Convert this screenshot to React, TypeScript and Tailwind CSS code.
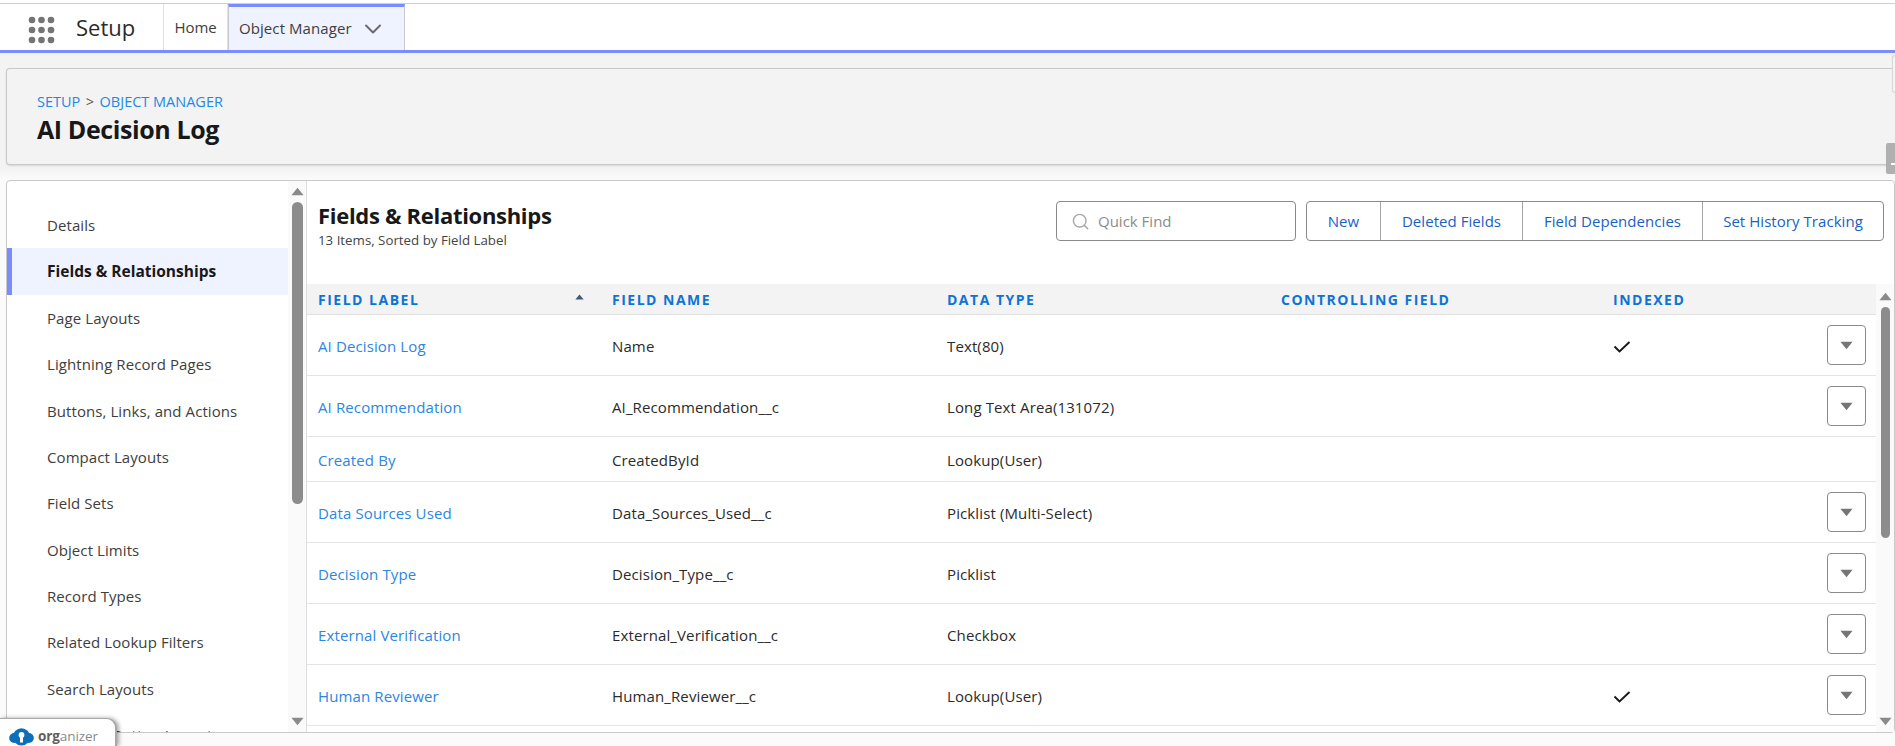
import { ChevronDown, Search } from 'lucide-react';

const SIDEBAR_ITEMS = [
  'Details',
  'Fields & Relationships',
  'Page Layouts',
  'Lightning Record Pages',
  'Buttons, Links, and Actions',
  'Compact Layouts',
  'Field Sets',
  'Object Limits',
  'Record Types',
  'Related Lookup Filters',
  'Search Layouts',
  'List View Button Layout',
];

const ROWS = [
  { label: 'AI Decision Log', name: 'Name', type: 'Text(80)', indexed: true, menu: true },
  { label: 'AI Recommendation', name: 'AI_Recommendation__c', type: 'Long Text Area(131072)', indexed: false, menu: true },
  { label: 'Created By', name: 'CreatedById', type: 'Lookup(User)', indexed: false, menu: false },
  { label: 'Data Sources Used', name: 'Data_Sources_Used__c', type: 'Picklist (Multi-Select)', indexed: false, menu: true },
  { label: 'Decision Type', name: 'Decision_Type__c', type: 'Picklist', indexed: false, menu: true },
  { label: 'External Verification', name: 'External_Verification__c', type: 'Checkbox', indexed: false, menu: true },
  { label: 'Human Reviewer', name: 'Human_Reviewer__c', type: 'Lookup(User)', indexed: true, menu: true },
];

const GRID = 'grid grid-cols-[294px_335px_334px_332px_1fr] pl-[11px]';

function Triangle({ up, className }: { up?: boolean; className?: string }) {
  return (
    <svg viewBox="0 0 14 9" className={className} fill="currentColor">
      <path d={up ? 'M7 0.5 L13.5 8.5 L0.5 8.5 Z' : 'M0.5 0.5 L13.5 0.5 L7 8.5 Z'} />
    </svg>
  );
}

function AppGrid() {
  const spots = [32, 41.5, 51];
  const rows = [16, 26, 36];
  return (
    <svg width="60" height="50" className="shrink-0 text-[#747474]" fill="currentColor">
      {rows.map((y) => spots.map((x) => <circle key={`${x}-${y}`} cx={x} cy={y} r="3.3" />))}
    </svg>
  );
}

function Check() {
  return (
    <svg width="18" height="14" viewBox="0 0 18 14" fill="none" stroke="#181818" strokeWidth="1.9">
      <path d="M1.5 6.5 L6.5 11.5 L16.5 2" />
    </svg>
  );
}

function Cloud() {
  return (
    <svg width="25" height="18" viewBox="0 0 25 18" className="shrink-0">
      <g fill="#0b70b8">
        <circle cx="12.5" cy="8.8" r="8.6" />
        <circle cx="5.2" cy="10" r="5" />
        <circle cx="19.8" cy="10" r="5" />
      </g>
      <circle cx="12.5" cy="7" r="2.9" fill="white" />
      <rect x="11" y="7" width="3" height="7.5" fill="white" />
    </svg>
  );
}

export default function App() {
  return (
    <div className="relative h-[746px] w-full overflow-hidden bg-white font-['Open_Sans',sans-serif] text-[#181818]">
      {/* Top nav */}
      <div className="mt-[3px] flex h-[50px] items-stretch border-t border-t-[#cfcfcf] border-b-[3px] border-b-[#7b8cff] bg-white">
        <AppGrid />
        <span className="ml-[16px] w-[87px] self-center text-[22px] leading-none text-[#2b2b2b]">Setup</span>
        <div className="flex w-[65px] items-center justify-center border-x border-[#e1e1e1] text-[15px] tracking-[-0.1px] text-[#3e3e3c]">
          Home
        </div>
        <div className="flex w-[177px] items-center gap-[7px] border-x border-x-[#c9c9d4] border-t-[3px] border-t-[#7b8cff] bg-[#eff2ff] pl-[10px] text-[15px] tracking-[0.08px] text-[#3e3e3c]">
          Object Manager
          <ChevronDown size={28} strokeWidth={1.7} className="text-[#6a6a6a]" />
        </div>
      </div>

      <div className="bg-[linear-gradient(#f3f3f3_0px,#f3f3f3_115px,#fbfbfb_127px,#fbfbfb_100%)] pb-[13px] pl-[6px] pt-[15px]">
        {/* Object header */}
        <div className="h-[97px] rounded-l-[4px] border-y border-l border-[#c9c9c9] bg-[#f3f3f3] pl-[30px] pt-[23px] shadow-[0_1px_2px_rgba(0,0,0,0.12)]">
          <div className="flex items-center gap-[5.5px] text-[14.5px] leading-[20px] text-[#1f88e5]">
            <span>SETUP</span>
            <span className="text-[#5c5c5c]">&gt;</span>
            <span>OBJECT MANAGER</span>
          </div>
          <h1 className="mt-[2px] text-[25px] font-bold leading-[30px] tracking-[-0.4px] text-[#181818]">AI Decision Log</h1>
        </div>

        <div className="mt-[15px] flex h-[553px] rounded-[4px] border border-[#c9c9c9] bg-white">
          {/* Sidebar */}
          <div className="flex w-[281px] shrink-0 flex-col overflow-hidden pt-[21px]">
            {SIDEBAR_ITEMS.map((item) => {
              const active = item === 'Fields & Relationships';
              return (
                <div
                  key={item}
                  className={
                    active
                      ? 'flex h-[46.4px] shrink-0 items-center border-l-[5px] border-[#7b8cff] bg-[#eff2ff] pl-[35px] pt-[1px] text-[15.5px] font-bold text-[#181818]'
                      : 'flex h-[46.4px] shrink-0 items-center pl-[40px] text-[15px] tracking-[0.08px] text-[#3e3e3c]'
                  }
                >
                  {item}
                </div>
              );
            })}
          </div>
          <div className="flex w-[19px] shrink-0 flex-col items-center border-r border-[#dddddd] bg-[#fafafa] pt-[6px]">
            <Triangle up className="h-[9px] w-[13px] text-[#8a8a8a]" />
            <div className="mt-[6px] h-[302px] w-[11px] rounded-full bg-[#8c8c8c]" />
            <Triangle className="mt-auto mb-[6px] h-[9px] w-[13px] text-[#8a8a8a]" />
          </div>

          {/* Main */}
          <div className="flex min-w-0 flex-1 flex-col">
            <div className="flex h-[103px] shrink-0 items-start justify-between pl-[11px] pr-[10px]">
              <div className="pt-[20px]">
                <h2 className="text-[22px] font-bold leading-[28px] tracking-[-0.3px] text-[#181818]">Fields &amp; Relationships</h2>
                <p className="mt-[2px] text-[13.3px] leading-[18px] text-[#444444]">13 Items, Sorted by Field Label</p>
              </div>
              <div className="mt-[20px] flex items-center gap-[10px]">
                <div className="flex h-[40px] w-[240px] items-center gap-[8px] rounded-[4px] border border-[#8a8a8a] pl-[14px] text-[15px] text-[#8c8c8c]">
                  <Search size={19} strokeWidth={1.8} className="text-[#a8a8a8]" />
                  Quick Find
                </div>
                <div className="flex h-[40px] w-[578px] rounded-[4px] border border-[#8a8a8a] text-[15px] tracking-[0.05px] text-[#1a5fc4]">
                  <div className="flex w-[73px] items-center justify-center">New</div>
                  <div className="flex w-[142px] items-center justify-center border-l border-[#a5a5a5]">Deleted Fields</div>
                  <div className="flex w-[180px] items-center justify-center border-l border-[#a5a5a5]">Field Dependencies</div>
                  <div className="flex flex-1 items-center justify-center border-l border-[#a5a5a5]">Set History Tracking</div>
                </div>
              </div>
            </div>

            <div className="flex min-h-0 flex-1">
              <div className="w-[1569px] shrink-0 overflow-hidden">
                <div className={`${GRID} h-[31px] items-center border-b border-[#e0e0e0] bg-[#f3f3f3] text-[14px] font-bold tracking-[1.5px] text-[#0d74d6]`}>
                  <div className="relative">
                    FIELD LABEL
                    <Triangle up className="absolute right-[28px] top-[5px] h-[6px] w-[9px] text-[#3e5b77]" />
                  </div>
                  <div>FIELD NAME</div>
                  <div>DATA TYPE</div>
                  <div>CONTROLLING FIELD</div>
                  <div>INDEXED</div>
                </div>
                {ROWS.map((row) => (
                  <div
                    key={row.label}
                    className={`${GRID} ${row.menu ? 'h-[61px]' : 'h-[45px]'} items-center border-b border-[#e5e5e5] text-[15px] tracking-[0.12px] text-[#2b2b2b]`}
                  >
                    <div className="pt-[2px] text-[#2d86e0]">{row.label}</div>
                    <div className="pt-[2px]">{row.name}</div>
                    <div className="pt-[2px]">{row.type}</div>
                    <div />
                    <div className="flex items-center justify-between pr-[10px]">
                      <span className="w-[18px] pt-[3px]">{row.indexed && <Check />}</span>
                      {row.menu && (
                        <div className="flex h-[40px] w-[39px] items-center justify-center rounded-[4px] border border-[#8a8a8a] bg-white">
                          <Triangle className="h-[9px] w-[13px] text-[#757575]" />
                        </div>
                      )}
                    </div>
                  </div>
                ))}
              </div>
              <div className="flex flex-1 flex-col items-center bg-[#fafafa] pt-[8px]">
                <Triangle up className="h-[9px] w-[13px] text-[#8a8a8a]" />
                <div className="mt-[6px] h-[231px] w-[9px] rounded-full bg-[#8c8c8c]" />
                <Triangle className="mt-auto mb-[6px] h-[9px] w-[13px] text-[#8a8a8a]" />
              </div>
            </div>
          </div>
        </div>
      </div>

      {/* Floating extension widgets */}
      <div className="absolute right-0 top-[55px] h-[38px] w-[3px] rounded-l-[3px] border border-r-0 border-[#d5d5d5] bg-[#f5f5f5]" />
      <div className="absolute right-0 top-[143px] flex h-[31px] w-[9px] items-end justify-end rounded-l-[2px] bg-[#b0b0b0] pb-[9px]">
        <div className="h-[2px] w-[4px] bg-white" />
      </div>
      <div className="absolute bottom-0 left-0 flex h-[28px] w-[117px] items-center rounded-tr-[10px] border-r-2 border-t border-[#a8a8a8] bg-white pl-[9px] pt-[8px] shadow-[2px_0_4px_rgba(0,0,0,0.35)]">
        <Cloud />
        <span className="ml-[4px] text-[13.5px] leading-none tracking-[-0.1px] text-[#8a8a8a]">
          <span className="font-bold text-[#5f5f5f]">org</span>anizer
        </span>
      </div>
    </div>
  );
}
